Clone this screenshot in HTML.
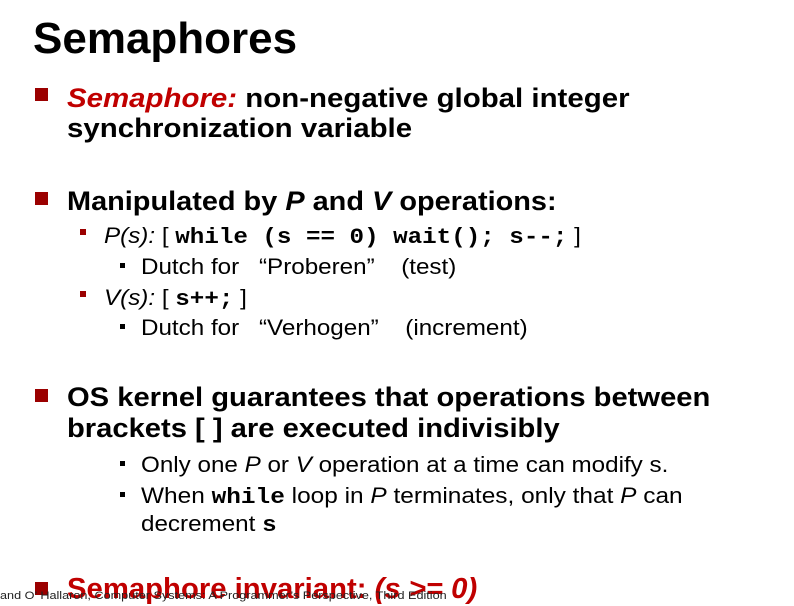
<!DOCTYPE html>
<html><head><meta charset="utf-8"><style>
body{margin:0;width:794px;height:605px;background:#fff;overflow:hidden;position:relative;font-family:"Liberation Sans",sans-serif;color:#000}
.l{position:absolute;white-space:nowrap;transform-origin:0 0}
.b{font-weight:bold}
.sq{position:absolute;background:#9b0000}
.sq2{position:absolute;background:#9b0000;width:6px;height:6px}
.sq3{position:absolute;background:#000;width:5px;height:5px}
.r{color:#c00000}
.m{font-family:"Liberation Mono",monospace;font-weight:bold}
.q{display:inline-block;width:18px}
</style></head><body>
<div class="l b" style="left:33px;top:14px;font-size:44px;transform:scaleX(1.0)">Semaphores</div>

<div class="sq" style="left:35px;top:88px;width:13px;height:13px"></div>
<div class="l b" style="left:67px;top:83px;font-size:27px;transform:scaleX(1.09)"><i class="r">Semaphore:</i> non-negative global integer<br><span style="position:relative;top:-1px">synchronization variable</span></div>

<div class="sq" style="left:35px;top:192px;width:13px;height:13px"></div>
<div class="l b" style="left:67px;top:186px;font-size:27px;transform:scaleX(1.07)">Manipulated by <i>P</i> and <i>V</i> operations:</div>

<div class="sq2" style="left:80px;top:229px"></div>
<div class="l" style="left:104px;top:223px;font-size:22px;transform:scaleX(1.1)"><i>P(s):</i> [ <span class="m">while (s == 0) wait(); s--;</span> ]</div>
<div class="sq3" style="left:120px;top:263px"></div>
<div class="l" style="left:141px;top:254px;font-size:22px;transform:scaleX(1.1)">Dutch for<span class="q"></span>“Proberen”<span class="q"></span> (test)</div>
<div class="sq2" style="left:80px;top:291px"></div>
<div class="l" style="left:104px;top:285px;font-size:22px;transform:scaleX(1.1)"><i>V(s):</i> [ <span class="m">s++;</span> ]</div>
<div class="sq3" style="left:120px;top:324px"></div>
<div class="l" style="left:141px;top:315px;font-size:22px;transform:scaleX(1.1)">Dutch for<span class="q"></span>“Verhogen”<span class="q"></span> (increment)</div>

<div class="sq" style="left:35px;top:389px;width:13px;height:13px"></div>
<div class="l b" style="left:67px;top:382px;font-size:27px;line-height:31px;transform:scaleX(1.08)">OS kernel guarantees that operations between<br>brackets [ ] are executed indivisibly</div>

<div class="sq3" style="left:120px;top:461px"></div>
<div class="l" style="left:141px;top:452px;font-size:22px;transform:scaleX(1.1)">Only one <i>P</i> or <i>V</i> operation at a time can modify s.</div>
<div class="sq3" style="left:120px;top:492px"></div>
<div class="l" style="left:141px;top:483px;font-size:22px;transform:scaleX(1.11)">When <span class="m">while</span> loop in <i>P</i> terminates, only that <i>P</i> can</div>
<div class="l" style="left:141px;top:511px;font-size:22px;transform:scaleX(1.1)">decrement <span class="m">s</span></div>

<div class="sq" style="left:35px;top:582px;width:13px;height:13px"></div>
<div class="l b r" style="left:67px;top:573px;font-size:29px;transform:scaleX(1.01)">Semaphore invariant: <i>(s &gt;= 0)</i></div>
<div class="l" style="left:0px;top:590px;font-size:11px;color:#222;transform:scaleX(1.15)">and O’ Hallaron, Computer Systems: A Programmer’s Perspective, Third Edition</div>
</body></html>
